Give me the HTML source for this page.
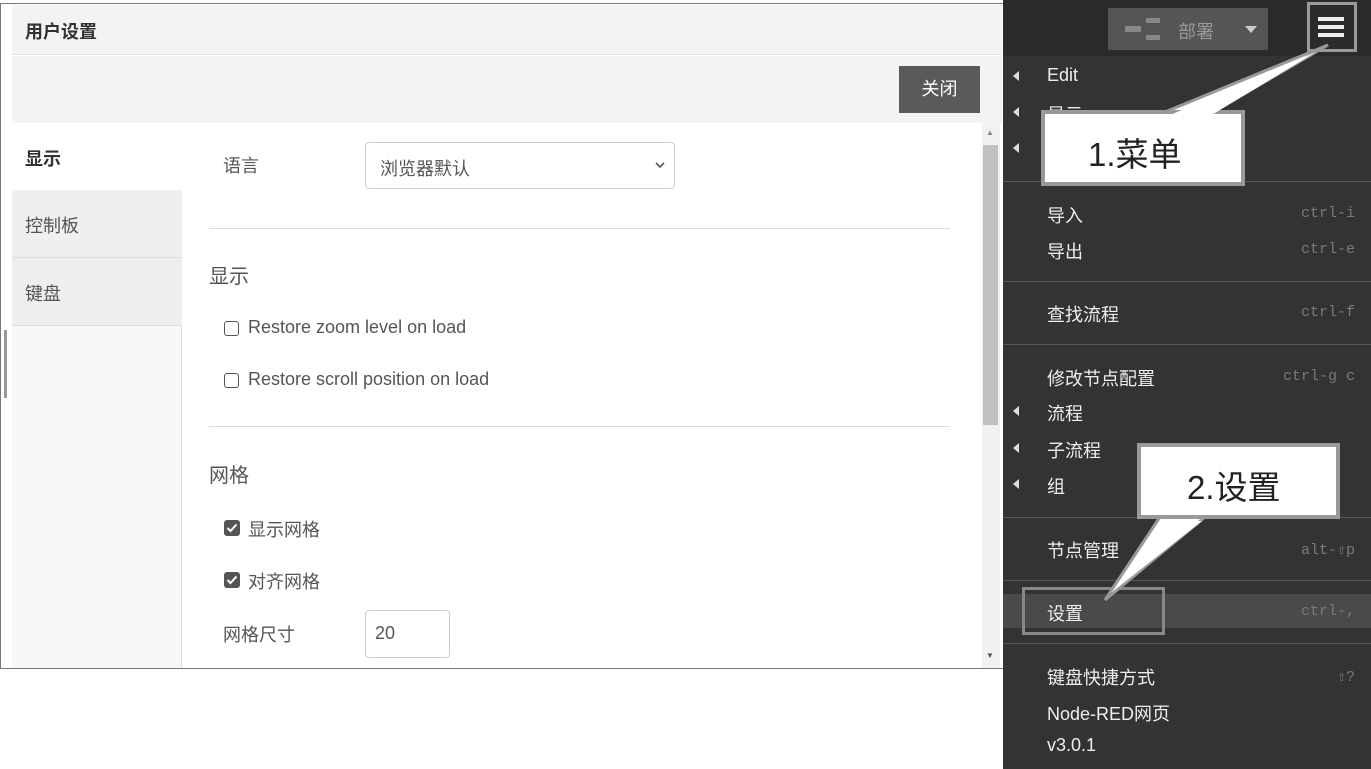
<!DOCTYPE html>
<html><head><meta charset="utf-8"><style>
*{margin:0;padding:0;box-sizing:border-box}
body{width:1371px;height:769px;position:relative;background:#fff;font-family:"Liberation Sans","Noto Sans CJK SC",sans-serif;overflow:hidden;color:#444}
.a{position:absolute}
.cb{position:absolute;width:15px;height:15px;border:1.5px solid #555;border-radius:3px;background:#fff}
.mi{position:absolute;left:1047px;color:#eee;font-size:18px}
.sc{position:absolute;right:16px;color:#7a7a7a;font-family:"Liberation Mono",monospace;font-size:15px}
.tri{position:absolute;left:1013px;width:0;height:0;border-top:5px solid transparent;border-bottom:5px solid transparent;border-right:6px solid #ddd}
.sep{position:absolute;left:1003px;width:368px;height:1px;background:#555}
</style></head><body>
<div class="a" style="left:0;top:3px;width:1004px;height:666px;border:1.5px solid #777;background:#fff"></div>
<div class="a" style="left:12px;top:5px;width:990px;height:50px;background:#f3f3f3;border-bottom:1px solid #e2e2e2"></div>
<div class="a" style="left:25px;top:18px;font-size:18px;font-weight:bold;color:#333">用户设置</div>
<div class="a" style="left:12px;top:56px;width:990px;height:67px;background:#f3f3f3"></div>
<div class="a" style="left:899px;top:66px;width:81px;height:47px;background:#5a5a5a;color:#fff;font-size:18px;text-align:center;line-height:47px">关闭</div>
<div class="a" style="left:12px;top:123px;width:170px;height:545px;background:#f8f8f8;border-right:1px solid #ddd"></div>
<div class="a" style="left:12px;top:190px;width:170px;height:135px;background:#efefef"></div>
<div class="a" style="left:12px;top:123px;width:170px;height:67px;background:#fff"></div>
<div class="a" style="left:12px;top:257px;width:170px;height:1px;background:#ddd"></div>
<div class="a" style="left:12px;top:325px;width:170px;height:1px;background:#ddd"></div>
<div class="a" style="left:25px;top:145px;font-size:18px;font-weight:bold;color:#333">显示</div>
<div class="a" style="left:25px;top:212px;font-size:18px;color:#555">控制板</div>
<div class="a" style="left:25px;top:280px;font-size:18px;color:#555">键盘</div>
<div class="a" style="left:4px;top:330px;width:3px;height:68px;background:#999"></div>
<div class="a" style="left:223px;top:152px;font-size:18px;color:#555">语言</div>
<div class="a" style="left:365px;top:142px;width:310px;height:47px;border:1px solid #ccc;border-radius:4px"></div>
<div class="a" style="left:380px;top:155px;font-size:18px;color:#555">浏览器默认</div>
<svg class="a" style="left:655px;top:161px" width="10" height="8"><path d="M1 2 L5 6 L9 2" stroke="#555" stroke-width="1.6" fill="none"/></svg>
<div class="a" style="left:209px;top:228px;width:741px;height:1px;background:#ddd"></div>
<div class="a" style="left:209px;top:260px;font-size:20px;color:#555">显示</div>
<div class="cb" style="left:224px;top:321px"></div>
<div class="a" style="left:248px;top:317px;font-size:18px;color:#555">Restore zoom level on load</div>
<div class="cb" style="left:224px;top:373px"></div>
<div class="a" style="left:248px;top:369px;font-size:18px;color:#555">Restore scroll position on load</div>
<div class="a" style="left:209px;top:426px;width:741px;height:1px;background:#ddd"></div>
<div class="a" style="left:209px;top:459px;font-size:20px;color:#555">网格</div>
<svg class="a" style="left:224px;top:520px" width="16" height="16"><rect x="0" y="0" width="16" height="16" rx="3" fill="#555"/><path d="M3.5 8 L6.5 11 L12.5 4.5" stroke="#fff" stroke-width="2" fill="none"/></svg>
<div class="a" style="left:248px;top:516px;font-size:18px;color:#555">显示网格</div>
<svg class="a" style="left:224px;top:572px" width="16" height="16"><rect x="0" y="0" width="16" height="16" rx="3" fill="#555"/><path d="M3.5 8 L6.5 11 L12.5 4.5" stroke="#fff" stroke-width="2" fill="none"/></svg>
<div class="a" style="left:248px;top:568px;font-size:18px;color:#555">对齐网格</div>
<div class="a" style="left:223px;top:621px;font-size:18px;color:#555">网格尺寸</div>
<div class="a" style="left:365px;top:610px;width:85px;height:48px;border:1px solid #ccc;border-radius:4px"></div>
<div class="a" style="left:375px;top:623px;font-size:18px;color:#555">20</div>
<div class="a" style="left:982px;top:123px;width:18px;height:545px;background:#f1f1f1"></div>
<div class="a" style="left:983px;top:145px;width:15px;height:280px;background:#c1c1c1"></div>
<div class="a" style="left:986px;top:128px;font-size:8px;color:#888">▲</div>
<div class="a" style="left:986px;top:651px;font-size:8px;color:#555">▼</div>
<div class="a" style="left:1003px;top:0;width:368px;height:769px;background:#333"></div>
<div class="a" style="left:1003px;top:0;width:368px;height:56px;background:#2b2b2b"></div>
<div class="a" style="left:1108px;top:8px;width:160px;height:42px;background:#555"></div>
<div class="a" style="left:1125px;top:26px;width:16px;height:6px;background:#888"></div>
<div class="a" style="left:1146px;top:18px;width:14px;height:5px;background:#888"></div>
<div class="a" style="left:1146px;top:35px;width:14px;height:5px;background:#888"></div>
<div class="a" style="left:1178px;top:18px;font-size:18px;color:#999">部署</div>
<div class="a" style="left:1245px;top:26px;border-left:6px solid transparent;border-right:6px solid transparent;border-top:7px solid #ccc"></div>
<div class="a" style="left:1307px;top:2px;width:50px;height:50px;border:3px solid #999"></div>
<div class="a" style="left:1318px;top:17px;width:26px;height:4px;background:#eee;box-shadow:0 8px 0 #eee,0 16px 0 #eee"></div>
<div class="tri" style="top:71px"></div><div class="mi" style="top:65px">Edit</div>
<div class="tri" style="top:107px"></div><div class="mi" style="top:101px">显示</div>
<div class="tri" style="top:143px"></div>
<div class="sep" style="top:181px"></div>
<div class="mi" style="top:202px">导入</div><div class="sc" style="top:205px">ctrl-i</div>
<div class="mi" style="top:238px">导出</div><div class="sc" style="top:241px">ctrl-e</div>
<div class="sep" style="top:281px"></div>
<div class="mi" style="top:301px">查找流程</div><div class="sc" style="top:304px">ctrl-f</div>
<div class="sep" style="top:344px"></div>
<div class="mi" style="top:365px">修改节点配置</div><div class="sc" style="top:368px">ctrl-g c</div>
<div class="tri" style="top:406px"></div><div class="mi" style="top:400px">流程</div>
<div class="tri" style="top:443px"></div><div class="mi" style="top:437px">子流程</div>
<div class="tri" style="top:479px"></div><div class="mi" style="top:473px">组</div>
<div class="sep" style="top:517px"></div>
<div class="mi" style="top:537px">节点管理</div><div class="sc" style="top:540px">alt-⇧p</div>
<div class="sep" style="top:580px"></div>
<div class="a" style="left:1003px;top:594px;width:368px;height:34px;background:#4a4a4a"></div>
<div class="mi" style="top:600px">设置</div><div class="sc" style="top:603px">ctrl-,</div>
<div class="a" style="left:1022px;top:587px;width:143px;height:48px;border:3px solid #888"></div>
<div class="sep" style="top:643px"></div>
<div class="mi" style="top:664px">键盘快捷方式</div><div class="sc" style="top:667px">⇧?</div>
<div class="mi" style="top:700px">Node-RED网页</div>
<div class="mi" style="top:735px">v3.0.1</div>
<svg class="a" style="left:0;top:0" width="1371" height="769">
<polygon points="1165,112 1328,45 1213,112" fill="#fff" stroke="#999" stroke-width="3"/>
<polygon points="1160,517 1105,600 1205,517" fill="#fff" stroke="#999" stroke-width="3"/>
</svg>
<div class="a" style="left:1041px;top:110px;width:204px;height:76px;background:#fff;border:4px solid #999"></div>
<div class="a" style="left:1088px;top:128px;font-size:33px;color:#222">1.菜单</div>
<div class="a" style="left:1137px;top:443px;width:203px;height:76px;background:#fff;border:4px solid #999"></div>
<div class="a" style="left:1187px;top:461px;font-size:33px;color:#222">2.设置</div>
<svg class="a" style="left:0;top:0" width="1371" height="769">
<polygon points="1168,116 1316,52 1210,116" fill="#fff"/>
<polygon points="1163,521 1112,592 1202,521" fill="#fff"/>
</svg>
</body></html>
